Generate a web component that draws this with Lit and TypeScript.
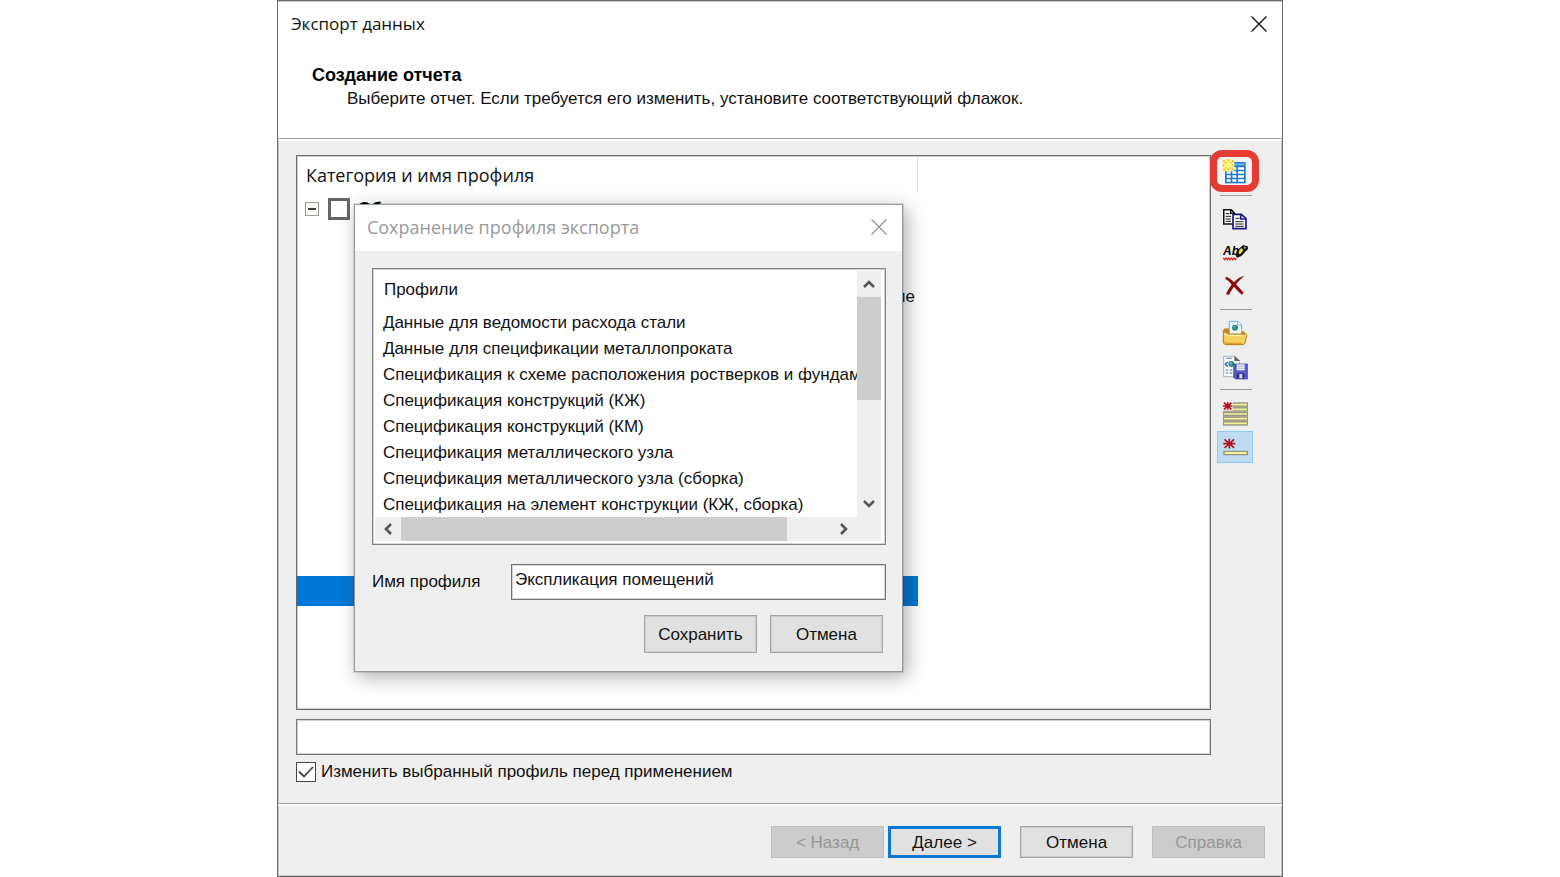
import { LitElement, html, css, svg } from "lit";
import { customElement, property, state } from "lit/decorators.js";
import { classMap } from "lit/directives/class-map.js";

const PROFILES = [
  "Данные для ведомости расхода стали",
  "Данные для спецификации металлопроката",
  "Спецификация к схеме расположения ростверков и фундам",
  "Спецификация конструкций (КЖ)",
  "Спецификация конструкций (КМ)",
  "Спецификация металлического узла",
  "Спецификация металлического узла (сборка)",
  "Спецификация на элемент конструкции (КЖ, сборка)",
];

const asterisk = (x: number, y: number, r: number) => svg`
  <g stroke="#b0101c" stroke-width="5">
    <path d="M${x - r} ${y}H${x + r}M${x} ${y - r * 0.8}V${y + r * 0.8}M${x - r * 0.8} ${y - r * 0.7}L${x + r * 0.8} ${y + r * 0.7}M${x + r * 0.8} ${y - r * 0.7}L${x - r * 0.8} ${y + r * 0.7}"/>
  </g>`;

const crossIcon = (size: number) => html`<svg width=${size} height=${size} viewBox="0 0 16 16" fill="none" stroke="currentColor" stroke-width="1.4"><path d="M.5 .5L15.5 15.5M15.5 .5L.5 15.5"/></svg>`;

const newTable = html`<svg width="25" height="25" viewBox="66 57 75 75">
  <rect x="75" y="66" width="62" height="64" fill="#1c78cf"/>
  <rect x="79" y="70" width="55" height="6" fill="#6db9ee"/>
  <g fill="#fff">
    <path d="M80 82h12v7h-12zM97 82h12v7h-12zM114 82h18v7h-18z"/>
    <path d="M80 94h12v7h-12zM97 94h12v7h-12zM114 94h18v7h-18z"/>
    <path d="M80 106h12v7h-12zM97 106h12v7h-12zM114 106h18v7h-18z"/>
    <path d="M80 118h12v7h-12zM97 118h12v7h-12zM114 118h18v7h-18z"/>
  </g>
  <rect x="67" y="58" width="36" height="36" fill="#fdf3a0"/>
  <path d="M85 58v36M67 76h36M70 61l30 30M100 61l-30 30" stroke="#e3c118" stroke-width="5" stroke-dasharray="6 3"/>
  <circle cx="85" cy="76" r="9" fill="#fffb7a"/>
</svg>`;

const copy = html`<svg width="24" height="21" viewBox="66 203 72 63">
  <path d="M68 205h22l10 10v33h-32z" fill="#fff" stroke="#111" stroke-width="5"/>
  <path d="M89 205v11h11" fill="none" stroke="#111" stroke-width="4"/>
  <path d="M74 217h11M74 225h16M74 233h16M74 240h16" stroke="#111" stroke-width="3"/>
  <path d="M96 219h25l14 13v30h-39z" fill="#fff" stroke="#15158c" stroke-width="5"/>
  <path d="M119 219v14h15" fill="none" stroke="#15158c" stroke-width="5"/>
  <path d="M103 231h12M103 241h25M103 248h25M103 255h25" stroke="#222" stroke-width="3"/>
</svg>`;

const rename = html`<svg width="25" height="17" viewBox="66 318 75 51">
  <text x="66" y="349" font-family="Liberation Sans, sans-serif" font-size="36" font-weight="700" font-style="italic" fill="#000">Ab</text>
  <path d="M104 351l3-15 19-18 14 4 1 8-20 21-12 5z" fill="#111"/>
  <path d="M115 333l6-6 6 7-9 11-5-1z" fill="#f4e436"/>
  <path d="M127 322l9 2-5 8z" fill="#8a8a8a"/>
  <path d="M67 357l4 5 4-5 4 5 4-5 4 5 4-5 4 5 4-5 4 5 3-5" fill="none" stroke="#e02323" stroke-width="4"/>
</svg>`;

const remove = html`<svg width="20" height="23" viewBox="72 405 60 69">
  <path d="M75 407c10 4 17 9 24 17 9-10 19-18 32-19-11 8-19 16-26 25 8 9 15 17 23 25l-5 6c-9-7-16-15-24-24-6 8-11 15-14 24l-10-1c4-12 10-20 17-29-6-8-12-13-19-17z" fill="#8b0a0a"/>
</svg>`;

const openFile = html`<svg width="26" height="26" viewBox="64 60 78 78">
  <path d="M68 92c0-5 4-7 9-7l12 1 5 7h30c8 0 10 4 10 10v24c0 4-3 7-7 7H78c-6 0-10-3-10-8z" fill="#c48a18"/>
  <path d="M86 64h26l11 10v34H86z" fill="#eaf7fd" stroke="#6fb2d8" stroke-width="3"/>
  <path d="M111 64v11h12" fill="#fff" stroke="#6fb2d8" stroke-width="3"/>
  <circle cx="103" cy="83" r="9" fill="#1d8f63"/>
  <path d="M99 77c5-2 8 3 5 8l-5 4z" fill="#4f9be0"/>
  <path d="M68 93l14 9h51c4 0 6 3 5 6l-5 20c-1 4-4 6-8 6H79c-7 0-11-3-11-8z" fill="#f7cf5c" stroke="#b57d15" stroke-width="3"/>
  <path d="M72 101l9 6h50" fill="none" stroke="#fff0ad" stroke-width="4"/>
  <path d="M72 124c2 5 5 6 9 6h43" fill="none" stroke="#dda02b" stroke-width="4"/>
</svg>`;

const saveFile = html`<svg width="25" height="25" viewBox="66 167 75 75">
  <path d="M68 171h34l13 12v49H68z" fill="#f7fafc" stroke="#a7b2bd" stroke-width="3"/>
  <path d="M100 170l17 15h-17z" fill="#565e66"/>
  <path d="M80 188l-7 7 7 7" fill="none" stroke="#2c4fb5" stroke-width="4"/>
  <circle cx="91" cy="194" r="9" fill="#1d8f63"/>
  <path d="M86 188c6-3 10 1 7 6l-6 5z" fill="#69a9e2"/>
  <path d="M75 177h17M75 212h6M86 212h8M75 221h6M86 221h8" stroke="#8a98a8" stroke-width="4"/>
  <path d="M98 194h42v45h-37l-5-5z" fill="#5a5ac4" stroke="#40409c" stroke-width="2"/>
  <rect x="107" y="195" width="24" height="18" fill="#e9ebf8"/>
  <path d="M110 201h18M110 207h18" stroke="#a7abd3" stroke-width="2"/>
  <rect x="107" y="222" width="23" height="16" fill="#30308a"/>
  <rect x="115" y="224" width="9" height="13" fill="#d5d8ee"/>
</svg>`;

const allRows = html`<svg width="25" height="25" viewBox="66 300 75 75">
  <rect x="66" y="304" width="75" height="70" fill="#95957d"/>
  <path d="M69 311h69M69 325h69M69 339h69M69 353h69M69 367h69" stroke="#f7f39a" stroke-width="5"/>
  <path d="M66 318h75M66 332h75M66 346h75M66 360h75" stroke="#dcdcd0" stroke-width="1"/>
  <rect x="66" y="300" width="29" height="29" fill="#efefef"/>
  ${asterisk(80, 315, 14)}
</svg>`;

const oneRow = html`<svg width="26" height="20" viewBox="67 407 78 60">
  <path d="M73 450h70v10h-70z" fill="#f7f39a" stroke="#95957d" stroke-width="4"/>
  ${asterisk(89, 427, 18)}
</svg>`;

const arrow = (d: string) => html`<svg class="arrow" width="12" height="12" viewBox="0 0 12 12" fill="none" stroke="#555" stroke-width="2.6"><path d=${d}/></svg>`;

const shared = css`
  * { box-sizing: border-box; }
  button, input { font: inherit; color: inherit; margin: 0; border-radius: 0; }
  button { padding: 0; }
  svg { display: block; }
  .push {
    height: 32px;
    width: 113px;
    padding-top: 1px;
    border: 1px solid #a6a6a6;
    box-shadow: inset 0 0 0 1px #cccccc;
    background: #e1e1e1;
  }
  .push:disabled { background: #cccccc; border-color: #bfbfbf; box-shadow: none; color: #969696; }
  .push.default { border: 3px solid #0a78d4; box-shadow: none; }
  .close { border: 0; background: none; display: grid; place-items: center; }
  .field { background: #fff; border: 1px solid #747474; box-shadow: inset 0 0 0 1px #d4d4d4; outline: none; }
`;

@customElement("save-profile-dialog")
export class SaveProfileDialog extends LitElement {
  @property() name = "";

  static styles = [shared, css`
    :host {
      display: block;
      background: #efefef;
      border: 1px solid #9a9a9a;
      box-shadow: 0 0 0 1px rgba(0, 0, 0, 0.1), 4px 5px 18px rgba(0, 0, 0, 0.32);
    }
    .bar {
      display: flex;
      align-items: center;
      justify-content: space-between;
      height: 46px;
      padding: 0 15px 2px 12px;
      background: #fff;
      color: #999;
      font: 18px/24px "Open Sans", sans-serif;
    }
    h2 { margin: 0; font: inherit; }
    .content { padding: 17px 16px 18px 17px; }
    .list {
      display: grid;
      grid-template: 1fr 24px / 1fr 24px;
      height: 277px;
      padding: 2px 4px 3px 2px;
      background: #fff;
      border: 1px solid #7a7f88;
      box-shadow: inset 0 0 0 1px #d3d5d9;
    }
    .items { overflow: hidden; white-space: nowrap; padding: 3px 0 0 8px; }
    .caption { height: 36px; line-height: 31px; padding-left: 1px; }
    ul { list-style: none; margin: 0; padding: 0; }
    li { height: 26px; line-height: 26px; }
    .track { display: flex; background: #efefef; }
    .track.v { flex-direction: column; }
    .step { flex: 0 0 26px; border: 0; background: none; display: grid; place-items: center; }
    .thumb { background: #cdcdcd; }
    .track.v .thumb { flex: 0 0 42%; }
    .track.h .thumb { flex: 0 0 80%; }
    .fill { flex: 1; }
    .corner { background: #efefef; }
    .row { display: flex; align-items: center; margin-top: 19px; }
    .row label { flex: 0 0 139px; }
    .row .field { flex: 1; min-width: 0; height: 36px; padding: 0 3px 4px; }
    .actions { display: flex; justify-content: flex-end; gap: 13px; padding: 15px 3px 0 0; }
    .actions .push { height: 38px; }
  `];

  render() {
    return html`
      <div class="bar">
        <h2>Сохранение профиля экспорта</h2>
        <button class="close" aria-label="Закрыть">${crossIcon(16)}</button>
      </div>
      <div class="content">
        <div class="list">
          <div class="items">
            <div class="caption">Профили</div>
            <ul>${PROFILES.map((p) => html`<li>${p}</li>`)}</ul>
          </div>
          <div class="track v">
            <button class="step" aria-label="Вверх">${arrow("M1 9L6 4L11 9")}</button>
            <div class="thumb"></div>
            <div class="fill"></div>
            <button class="step" aria-label="Вниз">${arrow("M1 3L6 8L11 3")}</button>
          </div>
          <div class="track h">
            <button class="step" aria-label="Влево">${arrow("M9 1L4 6L9 11")}</button>
            <div class="thumb"></div>
            <div class="fill"></div>
            <button class="step" aria-label="Вправо">${arrow("M3 1L8 6L3 11")}</button>
          </div>
          <div class="corner"></div>
        </div>
        <div class="row">
          <label for="name">Имя профиля</label>
          <input id="name" class="field" type="text" .value=${this.name}
            @input=${(e: Event) => (this.name = (e.target as HTMLInputElement).value)}>
        </div>
        <div class="actions">
          <button class="push">Сохранить</button>
          <button class="push">Отмена</button>
        </div>
      </div>`;
  }
}

interface TreeRow { kind: "group" | "item"; text?: string; selected?: boolean; }

const TREE: TreeRow[] = [
  { kind: "group", text: "Об" },
  { kind: "item" }, { kind: "item" }, { kind: "item", text: "ие" },
  { kind: "group" },
  { kind: "item" }, { kind: "item" }, { kind: "item" }, { kind: "item" },
  { kind: "group" },
  { kind: "item" }, { kind: "item" }, { kind: "item" },
  { kind: "item", selected: true },
];

@customElement("app-root")
export class AppRoot extends LitElement {
  @state() private editFirst = true;

  static styles = [shared, css`
    :host {
      display: flex;
      justify-content: center;
      min-height: 100vh;
      background: #fff;
      color: #111;
      font: 17px/24px "Liberation Sans", Arial, sans-serif;
    }
    .window {
      position: relative;
      display: flex;
      flex-direction: column;
      box-sizing: border-box;
      width: 64.5%;
      min-width: 720px;
      border: 1px solid #6a6a6a;
      box-shadow: inset 0 0 0 1px #c4c4c4;
      background: #efefef;
    }
    header {
      background: #fff;
      box-shadow: inset 0 1px #c4c4c4;
      border-bottom: 1px solid #a0a0a0;
      padding-bottom: 27px;
    }
    .title {
      display: flex;
      align-items: center;
      justify-content: space-between;
      height: 46px;
      padding: 0 15px 0 13px;
      font: 17px/24px "Open Sans", sans-serif;
    }
    h1 { margin: 0; font: inherit; }
    h2 { margin: 16px 0 0 34px; font-size: 18px; line-height: 24px; color: #000; }
    .hint { margin: 0 0 0 69px; }
    .body {
      flex: 1;
      display: flex;
      border-top: 2px solid #fff;
      padding: 9px 0 19px 18px;
    }
    .main { flex: 1; min-width: 0; display: flex; flex-direction: column; padding-top: 5px; }
    .tree {
      flex: 1;
      background: #fff;
      border: 1px solid #696969;
      box-shadow: inset 0 0 0 1px #cfcfcf;
      overflow: hidden;
      padding-top: 1px;
    }
    .colhead {
      width: 68%;
      height: 36px;
      border-right: 1px solid #e2e2e2;
      padding-left: 9px;
      font: 18px/36px "Open Sans", sans-serif;
    }
    .rows { width: 68%; }
    .group { display: flex; align-items: center; height: 31px; padding-left: 8px; font-weight: 700; color: #000; }
    .item { height: 29px; line-height: 29px; text-align: right; padding-right: 3px; }
    .item.selected { height: 30px; background: #0078d7; }
    .toggle {
      width: 14px; height: 14px; border: 1px solid #9b9b8f; background: #fff;
      display: grid; place-items: center;
    }
    .tick {
      appearance: none; display: grid; place-items: center;
      width: 20px; height: 20px; background: #fff; border: 1px solid #444;
    }
    .group .tick { width: 22px; height: 22px; border: 3px solid #666; margin: 0 8px 0 9px; }
    .filter { height: 36px; margin-top: 9px; width: 100%; }
    .check { display: flex; align-items: center; gap: 5px; margin-top: 5px; }
    .box { display: grid; place-items: center; }
    .box > * { grid-area: 1 / 1; }
    .box svg { pointer-events: none; }
    .tools {
      flex: 0 0 71px;
      display: flex;
      flex-direction: column;
      align-items: flex-start;
    }
    .tool {
      width: 36px; height: 32px; margin-left: 6px; border: 1px solid transparent; background: none;
      display: grid; place-items: center;
    }
    .tool + .tool { margin-top: 2px; }
    .tool.on { background: #c0dcf3; border-color: #90c8f6; }
    .tool.marked {
      position: relative;
      width: 49px; height: 42px; margin: 0 0 0 -1px;
      border: 7px solid #e53b32; border-radius: 12px; background: #f4f4f4;
    }
    .tools hr { width: 32px; margin: 6px 0 7px 9px; border: 0; border-top: 1px solid #9b9b9b; }
    .tools .marked + hr { margin-top: 3px; }
    footer {
      display: flex;
      justify-content: flex-end;
      border-top: 1px solid #a0a0a0;
      padding: 22px 17px 18px 0;
      box-shadow: inset 0 2px #fff;
    }
    footer .push + .push { margin-left: 4px; }
    footer .push.gap { margin-left: 19px; }
    save-profile-dialog {
      position: absolute;
      left: 76px;
      top: 203px;
      width: 549px;
    }
  `];

  private row(r: TreeRow) {
    if (r.kind === "item") {
      return html`<div class=${classMap({ item: true, selected: !!r.selected })}>${r.text ?? ""}</div>`;
    }
    if (!r.text) return html`<div class="group"></div>`;
    return html`<div class="group">
      <button class="toggle" aria-label="Свернуть"><svg width="8" height="8" viewBox="0 0 8 8"><path d="M0 4h8" stroke="#111" stroke-width="1.6"/></svg></button>
      <input class="tick" type="checkbox" id="cat"><label for="cat">${r.text}</label>
    </div>`;
  }

  render() {
    return html`
      <div class="window">
        <header>
          <div class="title">
            <h1>Экспорт данных</h1>
            <button class="close" aria-label="Закрыть">${crossIcon(16)}</button>
          </div>
          <h2>Создание отчета</h2>
          <p class="hint">Выберите отчет. Если требуется его изменить, установите соответствующий флажок.</p>
        </header>
        <div class="body">
          <div class="main">
            <div class="tree">
              <div class="colhead">Категория и имя профиля</div>
              <div class="rows">${TREE.map((r) => this.row(r))}</div>
            </div>
            <input class="field filter" type="text" aria-label="Описание">
            <div class="check">
              <span class="box">
                <input class="tick" type="checkbox" id="edit" .checked=${this.editFirst}
                  @change=${(e: Event) => (this.editFirst = (e.target as HTMLInputElement).checked)}>
                ${this.editFirst ? html`<svg width="16" height="12" viewBox="0 0 16 12"><path d="M1 5.5L6 10.5L15 1" fill="none" stroke="#444" stroke-width="1.8"/></svg>` : ""}
              </span>
              <label for="edit">Изменить выбранный профиль перед применением</label>
            </div>
          </div>
          <div class="tools">
            <button class="tool marked" aria-label="Создать">${newTable}</button>
            <hr>
            <button class="tool" aria-label="Копировать">${copy}</button>
            <button class="tool" aria-label="Переименовать">${rename}</button>
            <button class="tool" aria-label="Удалить">${remove}</button>
            <hr>
            <button class="tool" aria-label="Открыть">${openFile}</button>
            <button class="tool" aria-label="Сохранить в файл">${saveFile}</button>
            <hr>
            <button class="tool" aria-label="Все строки">${allRows}</button>
            <button class="tool on" aria-label="Одна строка">${oneRow}</button>
          </div>
        </div>
        <footer>
          <button class="push" disabled>&lt; Назад</button>
          <button class="push default">Далее &gt;</button>
          <button class="push gap">Отмена</button>
          <button class="push gap" disabled>Справка</button>
        </footer>
        <save-profile-dialog name="Экспликация помещений"></save-profile-dialog>
      </div>`;
  }
}
